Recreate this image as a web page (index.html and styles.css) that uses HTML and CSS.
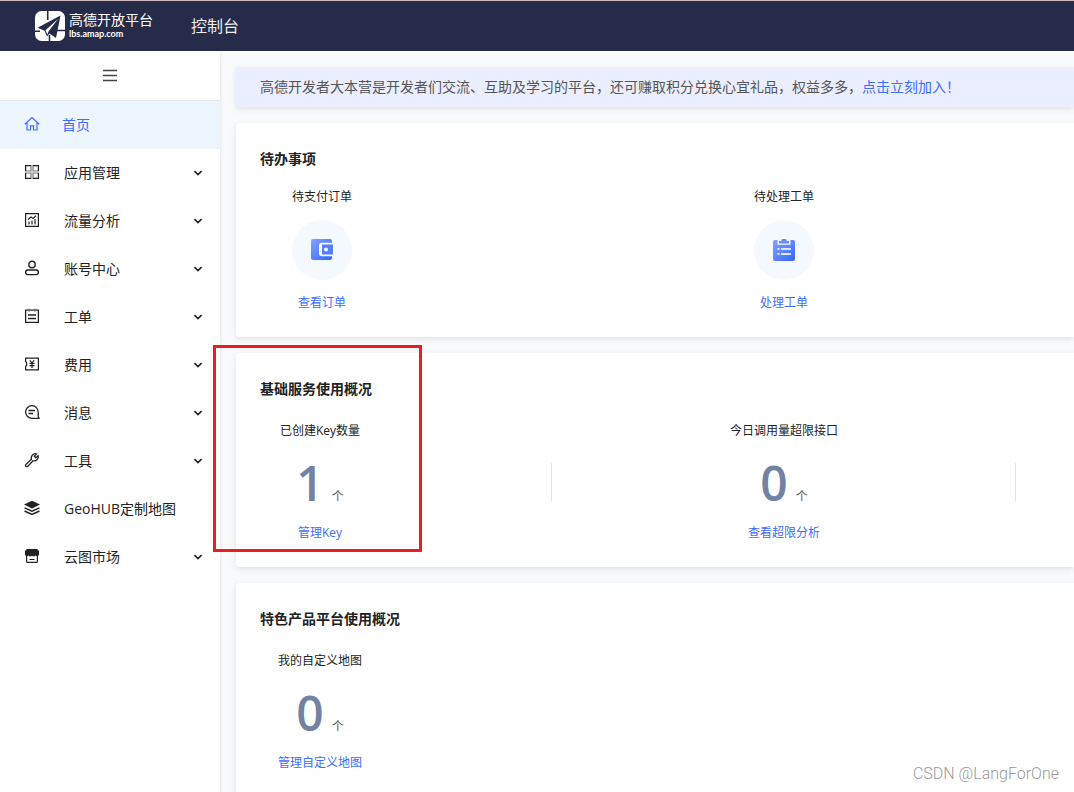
FILE: index.html
```
<!DOCTYPE html>
<html lang="zh-CN">
<head>
<meta charset="utf-8">
<title>控制台</title>
<link rel="stylesheet" href="styles.css">
</head>
<body>
<svg class="defs" width="0" height="0" aria-hidden="true">
  <defs>
    <linearGradient id="blue" x1="0" y1="0" x2="1" y2="1"><stop offset="0" stop-color="#84a3ff"/><stop offset="1" stop-color="#3366ff"/></linearGradient>
    <symbol id="chevron" viewBox="0 0 10 10"><path d="M1.5 3.2 5 6.5 8.500 3.200" fill="none" stroke="currentColor" stroke-width="1.700"/></symbol>
  </defs>
</svg>
<header class="topbar">
  <a class="brand" href="#">
    <svg class="brand-mark" viewBox="0 0 30 30" aria-hidden="true">
      <rect width="30" height="30" rx="6.500" fill="#fff"/>
      <path d="M12.700 0V9M0 20.300H5M19 19.500H30M14.500 24V30" stroke="#272b4a" stroke-width="1.600"/>
      <path d="M25.500 4.500 2.500 16.800 9.500 19.800 12 25.500 14.500 22.500 21 27Z" fill="#272b4a"/>
      <path d="M23 8 10.500 19.300 12.300 23.500 13.600 20.200Z" fill="#fff"/>
    </svg>
    <span class="brand-text"><span class="brand-name">高德开放平台</span><span class="brand-url">lbs.amap.com</span></span>
  </a>
  <span class="topbar-title">控制台</span>
</header>
<div class="layout">
  <aside class="sidebar">
    <button class="collapse" type="button" aria-label="收起菜单">
      <svg width="14" height="14" viewBox="0 0 14 14" fill="none" stroke="#444"><path d="M0 1.500H14M0 6.500H14M0 11.500H14" stroke-width="1.300"/></svg>
    </button>
    <nav class="menu">
      <a class="item active" href="#"><svg class="icon" viewBox="0 0 16 16"><path d="M.8 8.300 8 1.500 15.200 8.300M3 7V14H6.500V9.800H9.500V14H13V7" stroke-width="1.200"/></svg><span>首页</span></a>
      <a class="item" href="#"><svg class="icon" viewBox="0 0 16 16"><path d="M7 1V7H1M9 1V7H15M7 15V9H1M9 15V9H15" stroke="#777" stroke-width="1.200"/><path d="M7 1.600H1.600V7M9 1.600H14.400V7M7 14.400H1.600V9M9 14.400H14.400V9" stroke-width="1.300"/></svg><span>应用管理</span><svg class="chev"><use href="#chevron"/></svg></a>
      <a class="item" href="#"><svg class="icon" viewBox="0 0 16 16"><path d="M1.600 1.600H14.400V14.400H1.600ZM5 9.500V12.500M8 8.500V12.500M11 7V12.500M4 7.500 7 5 9 6.500 12 3.800" stroke-width="1.200"/></svg><span>流量分析</span><svg class="chev"><use href="#chevron"/></svg></a>
      <a class="item" href="#"><svg class="icon" viewBox="0 0 16 16"><circle cx="8" cy="4.500" r="3.200"/><rect x="1.600" y="10" width="12.800" height="4.600" rx="2.300"/></svg><span>账号中心</span><svg class="chev"><use href="#chevron"/></svg></a>
      <a class="item" href="#"><svg class="icon" viewBox="0 0 16 16"><path d="M4 2.200H1.600V14.400H14.400V2.200H12M6 2.200H10M5 .8V3.500M11 .8V3.500M4 7H12M4 10.500H12" stroke-width="1.300"/></svg><span>工单</span><svg class="chev"><use href="#chevron"/></svg></a>
      <a class="item" href="#"><svg class="icon" viewBox="0 0 16 16"><path d="M1.600 2.100H14.400V13.900H1.600V10.500L2.600 9.500V6.500L1.600 5.500ZM5.800 4.300 8 7 10.200 4.300M8 7V12M5.500 7.500H10.500M5.500 9.700H10.500" stroke-width="1.200"/></svg><span>费用</span><svg class="chev"><use href="#chevron"/></svg></a>
      <a class="item" href="#"><svg class="icon" viewBox="0 0 16 16"><path d="M14.400 14.300H7.600A6.300 6.300 0 1 1 14.200 8V12.200L15 14.300ZM4.500 6.500H11M4.500 9.500H9" stroke-width="1.300"/></svg><span>消息</span><svg class="chev"><use href="#chevron"/></svg></a>
      <a class="item" href="#"><svg class="icon" viewBox="0 0 16 16"><path d="M1.800 12.400 7.400 7.200C6.600 4 9.300 1 12.500 1.900L10.300 4.200 11.800 5.800 14.200 3.600C15 6.900 12 9.600 9 8.800L3.700 14.400C2.300 15.200.8 13.800 1.800 12.400Z" stroke-width="1.300"/></svg><span>工具</span><svg class="chev"><use href="#chevron"/></svg></a>
      <a class="item" href="#"><svg class="icon" viewBox="0 0 16 16"><path d="M8 .8 16 4.600 8 8.400 0 4.600Z" fill="currentColor" stroke="none"/><path d="M.5 7.800 8 11.200 15.500 7.800M.5 11 8 14.400 15.500 11"/></svg><span>GeoHUB定制地图</span></a>
      <a class="item" href="#"><svg class="icon" viewBox="0 0 16 16"><path d="M3 1H13L15 3V6.500A2 2 0 0 1 11.500 7.500 2.400 2.400 0 0 1 8 7.800 2.400 2.400 0 0 1 4.500 7.500 2 2 0 0 1 1 6.500V3Z" fill="currentColor" stroke="none"/><path d="M2.600 8V13.200A1 1 0 0 0 3.600 14.300H12.400A1 1 0 0 0 13.400 13.200V8M5.500 11.500H10.500" stroke-width="1.200"/></svg><span>云图市场</span><svg class="chev"><use href="#chevron"/></svg></a>
    </nav>
  </aside>
  <main class="content">
    <p class="notice">高德开发者大本营是开发者们交流、互助及学习的平台，还可赚取积分兑换心宜礼品，权益多多，<a href="#">点击立刻加入！</a></p>
    <section class="card">
      <h2>待办事项</h2>
      <div class="todos">
        <div class="todo">
          <span class="label">待支付订单</span>
          <span class="disc"><svg width="22" height="22" viewBox="0 0 22 22"><path d="M2 0H19A2 2 0 0 1 21 2V3.800H10.500A2.500 2.500 0 0 0 8 6.300V14.700A2.500 2.500 0 0 0 10.500 17.200H21V19A2 2 0 0 1 19 21H2A2 2 0 0 1 0 19V2A2 2 0 0 1 2 0Z" fill="url(#blue)"/><path d="M11 5.500H22V15.500H11Z" fill="#557fff"/><circle cx="15" cy="10.500" r="1.900" fill="#fff"/></svg></span>
          <a href="#">查看订单</a>
        </div>
        <div class="todo">
          <span class="label">待处理工单</span>
          <span class="disc"><svg width="22" height="22" viewBox="0 0 22 22"><path d="M2 1H4.500V5.800H17.500V1H20A2 2 0 0 1 22 3V20A2 2 0 0 1 20 22H2A2 2 0 0 1 0 20V3A2 2 0 0 1 2 1Z" fill="url(#blue)"/><path d="M6 4.500V2H8L9 0H13L14 2H16V4.500Z" fill="#6c91ff"/><path d="M4.500 10H6.500M8 10H18M4.500 15H6.500M8 15H18" stroke="#dfe7ff" stroke-width="1.800"/></svg></span>
          <a href="#">处理工单</a>
        </div>
      </div>
    </section>
    <section class="card">
      <h2>基础服务使用概况</h2>
      <div class="stats">
        <div class="stat divided"><div class="stat-body"><span class="label">已创建Key数量</span><span class="value"><strong>1</strong>个</span><a href="#">管理Key</a></div></div>
        <div class="stat divided"><div class="stat-body"><span class="label">今日调用量超限接口</span><span class="value"><strong>0</strong>个</span><a href="#">查看超限分析</a></div></div>
      </div>
    </section>
    <section class="card">
      <h2>特色产品平台使用概况</h2>
      <div class="stats">
        <div class="stat"><div class="stat-body"><span class="label">我的自定义地图</span><span class="value"><strong>0</strong>个</span><a href="#">管理自定义地图</a></div></div>
      </div>
    </section>
  </main>
</div>
<div class="highlight"></div>
<span class="watermark">CSDN @LangForOne</span>
</body>
</html>
```
FILE: styles.css
```
* { box-sizing: border-box; }
body {
  margin: 0;
  height: 100vh;
  display: flex;
  flex-direction: column;
  position: relative;
  overflow: hidden;
  color: #222;
  background: #f9fafc;
  font: 14px/24px "Open Sans", "Noto Sans CJK SC", sans-serif;
}
a { color: #3d6dff; text-decoration: none; }
.defs { position: absolute; }

.topbar {
  flex: none;
  display: flex;
  align-items: center;
  height: 51px;
  padding-left: 35px;
  border-top: 1px solid #cdb9bb;
  background: #272b4a;
  color: #eee;
}
.brand { display: flex; align-items: center; gap: 4px; width: 156px; color: #fff; }
.brand-mark { width: 30px; height: 30px; }
.brand-text { display: flex; flex-direction: column; }
.brand-name { font-size: 14px; line-height: 16px; font-weight: 400; white-space: nowrap; }
.brand-url { font: 700 9px/12px Lato, sans-serif; }
.topbar-title { font-size: 16px; }

.layout { flex: 1; display: flex; min-height: 0; }
.sidebar { flex: none; width: 220px; background: #fff; box-shadow: 0 2px 4px rgba(0, 0, 0, .12); }
.collapse {
  display: flex;
  align-items: center;
  justify-content: center;
  width: 100%;
  height: 50px;
  padding: 0;
  border: 0;
  border-bottom: 1px solid #e8e8e8;
  background: none;
}
.menu { display: flex; flex-direction: column; }
.item { display: flex; align-items: center; height: 48px; padding: 0 17px 0 24px; color: #222; }
.item span { flex: 1; margin-left: 24px; }
.item.active { background: #edf5ff; color: #3d6dff; }
.item.active span { margin-left: 22px; }
.icon { width: 16px; height: 16px; margin-bottom: 2px; fill: none; stroke: currentColor; stroke-width: 1.4; }
.chev { width: 10px; height: 10px; margin-bottom: 1px; }

.content { flex: 1; min-width: 0; padding: 16px 0 0 16px; }
.notice {
  margin: 0 0 16px;
  padding: 8px 24px;
  background: #ebeeff;
  color: #555;
  white-space: nowrap;
  box-shadow: 0 2px 6px rgba(0, 0, 0, .1);
}
.card {
  margin-bottom: 16px;
  padding: 24px 0 24px 24px;
  overflow: hidden;
  border-radius: 4px 0 0 4px;
  background: #fff;
  box-shadow: 0 2px 6px rgba(0, 0, 0, .1);
}
.card h2 { margin: 0; font-size: 14px; line-height: 24px; font-weight: 700; }
.todos, .stats { display: flex; font-size: 12px; line-height: 20px; }
.todos { padding: 16px 0 0 32px; }
.stats { padding-top: 20px; }
.todo { flex: none; width: 462px; display: grid; grid-template-columns: 60px; justify-items: center; gap: 13px; white-space: nowrap; }
.disc { display: flex; align-items: center; justify-content: center; width: 60px; height: 60px; border-radius: 50%; background: #f4f8ff; }
.stat { flex: none; width: 464px; display: flex; align-items: center; }
.stat.divided::after { content: ""; width: 1px; height: 38px; margin-left: 171px; background: #e3e4e6; }
.stat-body { width: 120px; display: flex; flex-direction: column; align-items: center; white-space: nowrap; }
.value { display: flex; align-items: baseline; gap: 8px; height: 80px; padding-top: 2px; line-height: 80px; color: #555; }
.value strong { color: #7382a3; font-size: 48px; font-weight: 600; }
.stat-body a { margin-top: 2px; }

.highlight { position: absolute; left: 213px; top: 345px; width: 209px; height: 207px; border: 3px solid #ed1c24; }
.watermark { position: absolute; right: 15px; bottom: 6px; color: #999; font: 300 16px/24px Roboto, sans-serif; }
```
